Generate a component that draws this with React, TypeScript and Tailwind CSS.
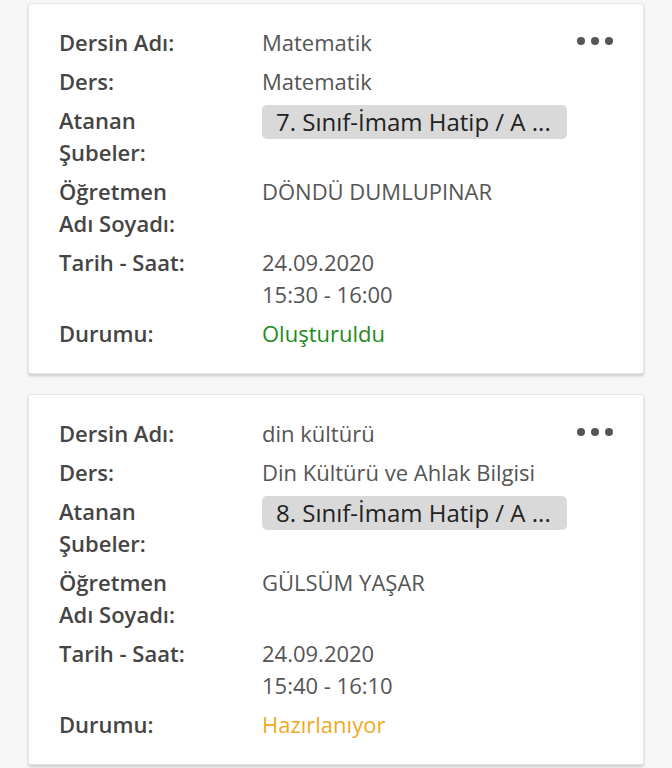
import * as React from "react";

type Lesson = {
  name: string;
  course: string;
  branch: string;
  teacher: string;
  date: string;
  time: string;
  status: string;
  statusClass: string;
};

const lessons: Lesson[] = [
  {
    name: "Matematik",
    course: "Matematik",
    branch: "7. Sınıf-İmam Hatip / A ...",
    teacher: "DÖNDÜ DUMLUPINAR",
    date: "24.09.2020",
    time: "15:30 - 16:00",
    status: "Oluşturuldu",
    statusClass: "text-[#1e8c1e]",
  },
  {
    name: "din kültürü",
    course: "Din Kültürü ve Ahlak Bilgisi",
    branch: "8. Sınıf-İmam Hatip / A ...",
    teacher: "GÜLSÜM YAŞAR",
    date: "24.09.2020",
    time: "15:40 - 16:10",
    status: "Hazırlanıyor",
    statusClass: "text-[#efaa1f]",
  },
];

function Row({ label, children }: { label: React.ReactNode; children: React.ReactNode }) {
  return (
    <div className="flex">
      <div className="w-[203px] shrink-0 font-semibold text-[#454545]">{label}</div>
      <div className="flex-1 text-[#555]">{children}</div>
    </div>
  );
}

function LessonCard({ lesson }: { lesson: Lesson }) {
  return (
    <div className="relative bg-white rounded-[3px] border border-[#e6e6e6] shadow-[0_2px_3px_rgba(0,0,0,0.18)] pl-[30px] pr-6 pt-[22px] pb-[24px] flex flex-col gap-[7px]">
      <div className="absolute right-[30px] top-[33px] flex gap-[6px]">
        <span className="w-2 h-2 rounded-full bg-[#555]" />
        <span className="w-2 h-2 rounded-full bg-[#555]" />
        <span className="w-2 h-2 rounded-full bg-[#555]" />
      </div>
      <Row label="Dersin Adı:">{lesson.name}</Row>
      <Row label="Ders:">{lesson.course}</Row>
      <Row
        label={
          <>
            Atanan
            <br />
            Şubeler:
          </>
        }
      >
        <div className="w-[305px] mt-[1px] rounded-[5px] bg-[#d9d9d9] pl-[14px] text-[#222] text-[24px] leading-[34px]">
          {lesson.branch}
        </div>
      </Row>
      <Row
        label={
          <>
            Öğretmen
            <br />
            Adı Soyadı:
          </>
        }
      >
        {lesson.teacher}
      </Row>
      <Row label="Tarih - Saat:">
        {lesson.date}
        <br />
        {lesson.time}
      </Row>
      <Row label="Durumu:">
        <span className={lesson.statusClass}>{lesson.status}</span>
      </Row>
    </div>
  );
}

export default function App() {
  return (
    <div
      className="min-h-screen bg-[#f7f7f7] px-[28px] pt-[3px] pb-4 flex flex-col gap-[20px] text-[22px] leading-[32px]"
      style={{ fontFamily: '"Open Sans", sans-serif' }}
    >
      {lessons.map((l, i) => (
        <LessonCard key={i} lesson={l} />
      ))}
    </div>
  );
}
